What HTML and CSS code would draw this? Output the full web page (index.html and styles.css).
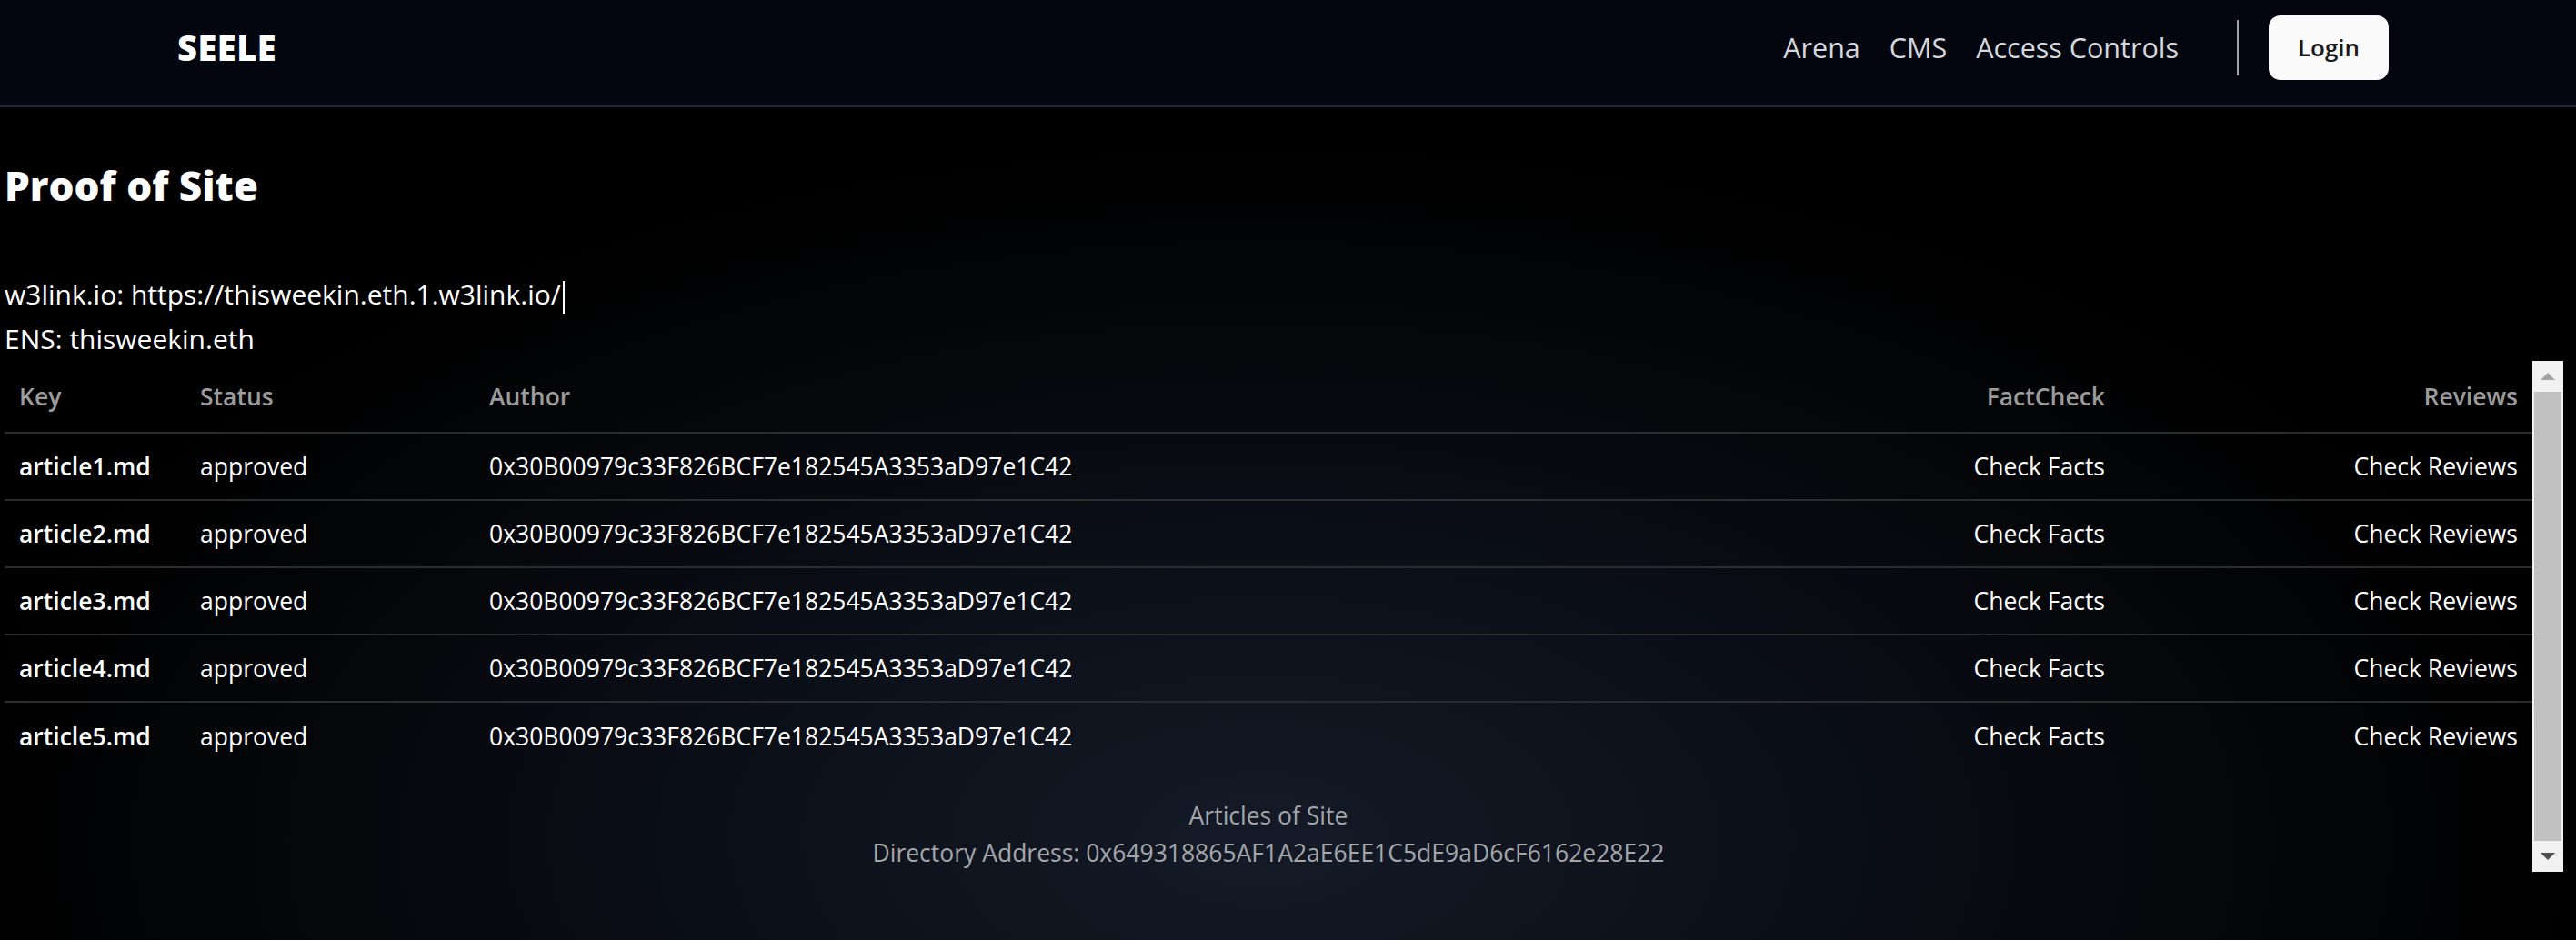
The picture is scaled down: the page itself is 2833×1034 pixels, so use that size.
FILE: index.html
```html
<!DOCTYPE html>
<html lang="en">
<head>
<meta charset="utf-8">
<title>Proof of Site</title>
<link rel="stylesheet" href="styles.css">
</head>
<body>
<header class="topbar">
  <div class="logo">SEELE</div>
  <div class="topbar-right">
    <nav class="nav">
      <a class="nav-link">Arena</a>
      <a class="nav-link">CMS</a>
      <a class="nav-link">Access Controls</a>
    </nav>
    <span class="divider"></span>
    <button class="login">Login</button>
  </div>
</header>
<main class="main">
  <h1 class="title">Proof of Site</h1>
  <div class="info">
    <div class="info-line">w3link.io: https://thisweekin.eth.1.w3link.io/<span class="caret"></span></div>
    <div class="info-line">ENS: thisweekin.eth</div>
  </div>
  <div class="table-wrap">
    <div class="table-view">
      <table class="articles">
        <colgroup>
          <col class="c-key">
          <col class="c-status">
          <col class="c-author">
          <col class="c-fact">
          <col class="c-rev">
        </colgroup>
        <caption class="caption">
          <div>Articles of Site</div>
          <div>Directory Address: 0x649318865AF1A2aE6EE1C5dE9aD6cF6162e28E22</div>
        </caption>
        <thead>
          <tr>
            <th>Key</th>
            <th>Status</th>
            <th>Author</th>
            <th class="right">FactCheck</th>
            <th class="right">Reviews</th>
          </tr>
        </thead>
        <tbody>
          <tr>
            <td class="key">article1.md</td>
            <td>approved</td>
            <td>0x30B00979c33F826BCF7e182545A3353aD97e1C42</td>
            <td class="right">Check Facts</td>
            <td class="right">Check Reviews</td>
          </tr>
          <tr>
            <td class="key">article2.md</td>
            <td>approved</td>
            <td>0x30B00979c33F826BCF7e182545A3353aD97e1C42</td>
            <td class="right">Check Facts</td>
            <td class="right">Check Reviews</td>
          </tr>
          <tr>
            <td class="key">article3.md</td>
            <td>approved</td>
            <td>0x30B00979c33F826BCF7e182545A3353aD97e1C42</td>
            <td class="right">Check Facts</td>
            <td class="right">Check Reviews</td>
          </tr>
          <tr>
            <td class="key">article4.md</td>
            <td>approved</td>
            <td>0x30B00979c33F826BCF7e182545A3353aD97e1C42</td>
            <td class="right">Check Facts</td>
            <td class="right">Check Reviews</td>
          </tr>
          <tr>
            <td class="key">article5.md</td>
            <td>approved</td>
            <td>0x30B00979c33F826BCF7e182545A3353aD97e1C42</td>
            <td class="right">Check Facts</td>
            <td class="right">Check Reviews</td>
          </tr>
        </tbody>
      </table>
    </div>
    <div class="scrollbar" aria-hidden="true">
      <span class="sb-btn"><span class="arrow-up"></span></span>
      <span class="sb-thumb"></span>
      <span class="sb-btn"><span class="arrow-down"></span></span>
    </div>
  </div>
</main>
</body>
</html>
```
FILE: styles.css
```css
* { box-sizing: border-box; }

html, body {
  margin: 0;
  padding: 0;
  background: #000;
}

body {
  font-family: "Open Sans", "Noto Sans", sans-serif;
  color: #fff;
  min-height: 1034px;
  display: flex;
  flex-direction: column;
}

.topbar {
  height: 118px;
  flex: none;
  display: flex;
  align-items: center;
  justify-content: space-between;
  padding: 0 206px 12px 195px;
  background: #03060e;
  border-bottom: 2px solid #232833;
}

.logo {
  font-size: 38px;
  font-weight: 800;
  letter-spacing: 0.5px;
  color: #fff;
}

.topbar-right {
  display: flex;
  align-items: center;
}

.nav {
  display: flex;
  gap: 32px;
}

.nav-link {
  font-size: 30.5px;
  color: #d5d7dd;
}

.divider {
  width: 2px;
  height: 61px;
  background: #9ca0ab;
  margin: 0 33px 0 64px;
}

.login {
  width: 132px;
  height: 71px;
  border: none;
  border-radius: 13px;
  background: #fafafa;
  color: #1b1b1b;
  font-family: "Open Sans", "Noto Sans", sans-serif;
  font-size: 26px;
  font-weight: 600;
}

.main {
  flex: 1;
  padding: 0 14px 0 5px;
  background: radial-gradient(ellipse 1700px 900px at 49% 88%, #141a27 0%, #0b0f18 35%, #030406 70%, #000 85%);
}

.title {
  margin: 62px 0 71px;
  font-size: 44px;
  line-height: 48px;
  font-weight: 800;
}

.info {
  font-size: 30px;
  line-height: 49px;
}

.caret {
  display: inline-block;
  width: 2px;
  height: 36px;
  background: #fff;
  vertical-align: middle;
  margin-left: 2px;
}

.table-wrap {
  display: flex;
  align-items: stretch;
}

.table-view {
  flex: 1;
  min-width: 0;
}

.scrollbar {
  flex: none;
  width: 34px;
  display: flex;
  flex-direction: column;
  background: #f1f1f1;
}

.sb-btn {
  height: 34px;
  flex: none;
  display: flex;
  align-items: center;
  justify-content: center;
}

.arrow-up {
  width: 0;
  height: 0;
  border-left: 8px solid transparent;
  border-right: 8px solid transparent;
  border-bottom: 8px solid #a3a3a3;
}

.arrow-down {
  width: 0;
  height: 0;
  border-left: 8px solid transparent;
  border-right: 8px solid transparent;
  border-top: 8px solid #505050;
}

.sb-thumb {
  flex: 1;
  margin: 0 2px;
  background: #c1c1c1;
}

.articles {
  width: 100%;
  border-collapse: collapse;
  table-layout: fixed;
  font-size: 26.5px;
  caption-side: bottom;
}

.c-key { width: 199px; }
.c-status { width: 318px; }
.c-fact { width: 457px; }
.c-rev { width: 454px; }

.articles th {
  height: 79px;
  padding: 0 16px;
  text-align: left;
  font-weight: 600;
  color: #9b9b9b;
  border-bottom: 2px solid #2c2c2c;
}

.articles td {
  height: 74px;
  padding: 0 16px;
  white-space: nowrap;
}

.articles tbody tr + tr td {
  border-top: 2px solid #2c2c2c;
}

.articles .right { text-align: right; }

.articles .key { font-weight: 600; }

.caption {
  padding-top: 31px;
  font-size: 26.5px;
  line-height: 41px;
  color: #a4a6aa;
  text-align: center;
}
```
